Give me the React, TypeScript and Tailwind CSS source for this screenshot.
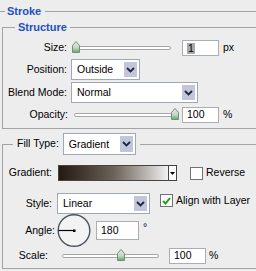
import React from 'react';

const line = 'border-[#a3a3a3]';

function Chevron() {
  return (
    <svg width="9" height="6" viewBox="0 0 9 6">
      <path d="M1 1 L4.5 4.5 L8 1" fill="none" stroke="#1e2540" strokeWidth="1.8" />
    </svg>
  );
}

function Dropdown({ value, w }: { value: string; w: string }) {
  return (
    <div className={`flex h-[21px] border border-[#9fa8b6] bg-white ${w}`}>
      <span className="flex flex-1 items-center pl-[5px] pt-px">{value}</span>
      <span className="m-px flex w-[15px] items-center justify-center border border-white bg-[#c3c5da]">
        <Chevron />
      </span>
    </div>
  );
}

function Field({ value, w, h = 'h-[16px]', selected }: { value: string; w: string; h?: string; selected?: boolean }) {
  return (
    <div className={`flex items-center border border-[#a9adb5] bg-white pl-[4px] ${w} ${h}`}>
      {selected ? <span className="bg-[#a9a9a9] px-px leading-[11px]">{value}</span> : value}
    </div>
  );
}

function Thumb() {
  return (
    <svg width="8" height="12" viewBox="0 0 8 12">
      <defs>
        <linearGradient id="tg" x1="0" y1="0" x2="0" y2="1">
          <stop offset="0" stopColor="#e6e8e6" />
          <stop offset="0.55" stopColor="#c9d6c9" />
          <stop offset="1" stopColor="#4fb455" />
        </linearGradient>
      </defs>
      <path d="M0.5 4.5 L4 0.5 L7.5 4.5 V11.5 H0.5 Z" fill="url(#tg)" stroke="#7d8a80" strokeWidth="1" />
    </svg>
  );
}

function Slider({ w, at }: { w: string; at: string }) {
  return (
    <div className={`relative flex h-[14px] items-center ${w}`}>
      <div className="h-[4px] flex-1 rounded-full border border-[#a6a6a6] bg-white" />
      <div className={`absolute top-0 ${at}`}>
        <Thumb />
      </div>
    </div>
  );
}

function Check({ checked }: { checked?: boolean }) {
  return (
    <div className="flex h-[13px] w-[13px] items-center justify-center border border-[#6f7379] bg-white">
      {checked && (
        <svg width="9" height="8" viewBox="0 0 9 8">
          <path d="M1 4 L3.5 6.5 L8 1.2" fill="none" stroke="#21a121" strokeWidth="2" />
        </svg>
      )}
    </div>
  );
}

export default function App() {
  return (
    <div className="h-[271px] w-[256px] overflow-hidden bg-[#ededed] text-[10.5px] text-black [font-family:'Liberation_Sans',Arial,sans-serif]">
      <div className="mt-[5px] flex h-[12px] items-center">
        <div className="h-px w-[5px] bg-[#a3a3a3]" />
        <span className="ml-[2px] text-[11px] font-bold text-[#2250c0]">Stroke</span>
        <div className="ml-[4px] h-px flex-1 bg-[#a3a3a3]" />
      </div>

      <fieldset className={`ml-[2px] mt-[4px] border-t border-b border-l ${line} pb-[5px]`}>
        <legend className="ml-[12px] px-[3px] text-[11px] leading-[12px] font-bold text-[#2250c0]">Structure</legend>
        <div className="mt-[7px] flex h-[16px] items-center">
          <span className="w-[64px] text-right">Size:</span>
          <Slider w="ml-[5px] w-[99px]" at="left-0" />
          <Field value="1" w="ml-[11px] w-[37px]" selected />
          <span className="ml-[4px]">px</span>
        </div>
        <div className="mt-[3px] flex items-center">
          <span className="w-[64px] text-right">Position:</span>
          <div className="ml-[4px]">
            <Dropdown value="Outside" w="w-[69px]" />
          </div>
        </div>
        <div className="mt-[2px] flex items-center">
          <span className="w-[64px] text-right">Blend Mode:</span>
          <div className="ml-[4px]">
            <Dropdown value="Normal" w="w-[127px]" />
          </div>
        </div>
        <div className="mt-[4px] flex h-[16px] items-center">
          <span className="w-[65px] text-right">Opacity:</span>
          <Slider w="ml-[6px] w-[105px]" at="right-0" />
          <Field value="100" w="ml-[3px] w-[37px]" />
          <span className="ml-[4px]">%</span>
        </div>
      </fieldset>

      <fieldset className={`ml-[2px] mt-[4px] border-t border-b border-l ${line} pb-[4px]`}>
        <legend className="ml-[10px] flex items-center px-[4px]">
          <span>Fill Type:</span>
          <div className="ml-[4px]">
            <Dropdown value="Gradient" w="w-[73px] h-[22px]" />
          </div>
        </legend>
        <div className="mt-[10px] flex h-[16px] items-center">
          <span className="w-[49px] text-right">Gradient:</span>
          <div className="ml-[6px] flex h-[16px] w-[119px] border border-[#444]">
            <div className="flex-1 bg-gradient-to-r from-[#241a12] via-[#6b6258] to-[#f2f2f2]" />
            <div className="flex w-[8px] items-center justify-center border-l border-[#444] bg-white">
              <svg width="5" height="3" viewBox="0 0 5 3">
                <path d="M0 0 H5 L2.5 3 Z" fill="#000" />
              </svg>
            </div>
          </div>
          <div className="ml-[13px]">
            <Check />
          </div>
          <span className="ml-[3px]">Reverse</span>
        </div>
        <div className="mt-[12px] flex items-start">
          <div className="flex items-center">
            <span className="w-[49px] text-right">Style:</span>
            <div className="ml-[5px]">
              <Dropdown value="Linear" w="w-[93px] h-[20px]" />
            </div>
          </div>
          <div className="ml-[10px] flex items-center">
            <Check checked />
            <span className="ml-[3px]">Align with Layer</span>
          </div>
        </div>
        <div className="flex h-[33px] items-center">
          <span className="w-[52px] text-right">Angle:</span>
          <svg className="ml-[2px]" width="34" height="33" viewBox="0 0 34 33">
            <circle cx="17" cy="16.5" r="15.8" fill="#f3f3f3" stroke="#4c5266" strokeWidth="1.4" />
            <path d="M1.5 16.5 H17" stroke="#000" strokeWidth="1.2" />
            <rect x="16" y="15.5" width="2.5" height="2.5" fill="#000" />
          </svg>
          <Field value="180" w="ml-[5px] w-[43px]" h="h-[19px]" />
          <span className="ml-[4px] self-start pt-[6px]">°</span>
        </div>
        <div className="mt-[1px] flex h-[16px] items-center">
          <span className="w-[45px] text-right">Scale:</span>
          <Slider w="ml-[14px] w-[97px]" at="left-[55px]" />
          <Field value="100" w="ml-[10px] w-[37px]" />
          <span className="ml-[3px]">%</span>
        </div>
      </fieldset>
    </div>
  );
}
